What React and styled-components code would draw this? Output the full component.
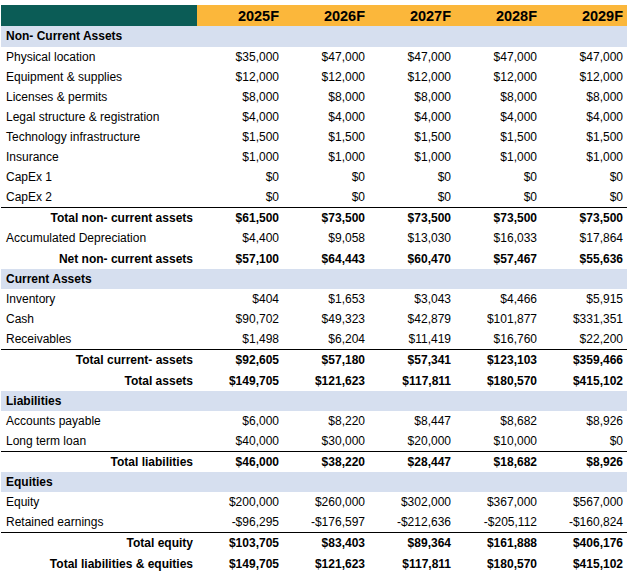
import React from 'react';
import styled, { createGlobalStyle } from 'styled-components';

const years = ['2025F', '2026F', '2027F', '2028F', '2029F'];

const sections = [
    {
        title: 'Non- Current Assets',
        tall: true,
        rows: [
            { label: 'Physical location', values: ['$35,000', '$47,000', '$47,000', '$47,000', '$47,000'] },
            { label: 'Equipment & supplies', values: ['$12,000', '$12,000', '$12,000', '$12,000', '$12,000'] },
            { label: 'Licenses & permits', values: ['$8,000', '$8,000', '$8,000', '$8,000', '$8,000'] },
            { label: 'Legal structure & registration', values: ['$4,000', '$4,000', '$4,000', '$4,000', '$4,000'] },
            { label: 'Technology infrastructure', values: ['$1,500', '$1,500', '$1,500', '$1,500', '$1,500'] },
            { label: 'Insurance', values: ['$1,000', '$1,000', '$1,000', '$1,000', '$1,000'] },
            { label: 'CapEx 1', values: ['$0', '$0', '$0', '$0', '$0'] },
            { label: 'CapEx 2', values: ['$0', '$0', '$0', '$0', '$0'] },
            { label: 'Total non- current assets', total: true, line: true, values: ['$61,500', '$73,500', '$73,500', '$73,500', '$73,500'] },
            { label: 'Accumulated Depreciation', values: ['$4,400', '$9,058', '$13,030', '$16,033', '$17,864'] },
            { label: 'Net non- current assets', total: true, values: ['$57,100', '$64,443', '$60,470', '$57,467', '$55,636'] },
        ],
    },
    {
        title: 'Current Assets',
        rows: [
            { label: 'Inventory', values: ['$404', '$1,653', '$3,043', '$4,466', '$5,915'] },
            { label: 'Cash', values: ['$90,702', '$49,323', '$42,879', '$101,877', '$331,351'] },
            { label: 'Receivables', values: ['$1,498', '$6,204', '$11,419', '$16,760', '$22,200'] },
            { label: 'Total current- assets', total: true, line: true, values: ['$92,605', '$57,180', '$57,341', '$123,103', '$359,466'] },
            { label: 'Total assets', total: true, values: ['$149,705', '$121,623', '$117,811', '$180,570', '$415,102'] },
        ],
    },
    {
        title: 'Liabilities',
        rows: [
            { label: 'Accounts payable', values: ['$6,000', '$8,220', '$8,447', '$8,682', '$8,926'] },
            { label: 'Long term loan', values: ['$40,000', '$30,000', '$20,000', '$10,000', '$0'] },
            { label: 'Total liabilities', total: true, line: true, values: ['$46,000', '$38,220', '$28,447', '$18,682', '$8,926'] },
        ],
    },
    {
        title: 'Equities',
        rows: [
            { label: 'Equity', values: ['$200,000', '$260,000', '$302,000', '$367,000', '$567,000'] },
            { label: 'Retained earnings', values: ['-$96,295', '-$176,597', '-$212,636', '-$205,112', '-$160,824'] },
            { label: 'Total equity', total: true, line: true, values: ['$103,705', '$83,403', '$89,364', '$161,888', '$406,176'] },
            { label: 'Total liabilities & equities', total: true, values: ['$149,705', '$121,623', '$117,811', '$180,570', '$415,102'] },
        ],
    },
];

const BalanceSheet = () => {
    return (
        <Page>
            <GlobalStyle />
            <Table>
                <HeadRow>
                    <HeadLabel />
                    {years.map(y => <HeadCell key={y}>{y}</HeadCell>)}
                </HeadRow>
                {sections.map(section => (
                    <React.Fragment key={section.title}>
                        <SectionRow tall={section.tall}>{section.title}</SectionRow>
                        {section.rows.map(row => (
                            <Row key={row.label} line={row.line} tall={row.total}>
                                <Label total={row.total}>{row.label}</Label>
                                {row.values.map((v, i) => (
                                    <Value key={i} total={row.total}>{v}</Value>
                                ))}
                            </Row>
                        ))}
                    </React.Fragment>
                ))}
            </Table>
        </Page>
    )
}

const GlobalStyle = createGlobalStyle`
    body {
        margin: 0;
        background: #ffffff;
        font-family: "Liberation Sans", Arial, sans-serif;
        color: #000000;
    }
`;

const Page = styled.div`
    padding: 5px 0 0 1px;
`;

const Table = styled.div`
    width: 626px;
    display: flex;
    flex-direction: column;
`;

const grid = `
    display: grid;
    grid-template-columns: 196px repeat(5, 86px);
    align-items: center;
`;

const HeadRow = styled.div`
    ${grid}
    height: 21px;
    background-color: #fbb73b;
`;

const HeadLabel = styled.div`
    height: 100%;
    background-color: #0b5c56;
`;

const HeadCell = styled.div`
    text-align: right;
    padding-right: 4px;
    font-size: 14.5px;
    font-weight: bold;
`;

const SectionRow = styled.div`
    height: ${p => p.tall ? '21px' : '20px'};
    line-height: ${p => p.tall ? '21px' : '20px'};
    padding-left: 5px;
    background-color: #d6dfef;
    font-size: 12px;
    font-weight: bold;
`;

const Row = styled.div`
    ${grid}
    box-sizing: border-box;
    height: ${p => p.tall ? '21px' : '20px'};
    border-top: ${p => p.line ? '1px solid #000000' : 'none'};
    font-size: 12px;
`;

const Label = styled.div`
    text-align: ${p => p.total ? 'right' : 'left'};
    padding: ${p => p.total ? '0 4px 0 0' : '0 0 0 5px'};
    font-weight: ${p => p.total ? 'bold' : 'normal'};
    white-space: nowrap;
`;

const Value = styled.div`
    text-align: right;
    padding-right: 4px;
    font-weight: ${p => p.total ? 'bold' : 'normal'};
`;

export default BalanceSheet;
